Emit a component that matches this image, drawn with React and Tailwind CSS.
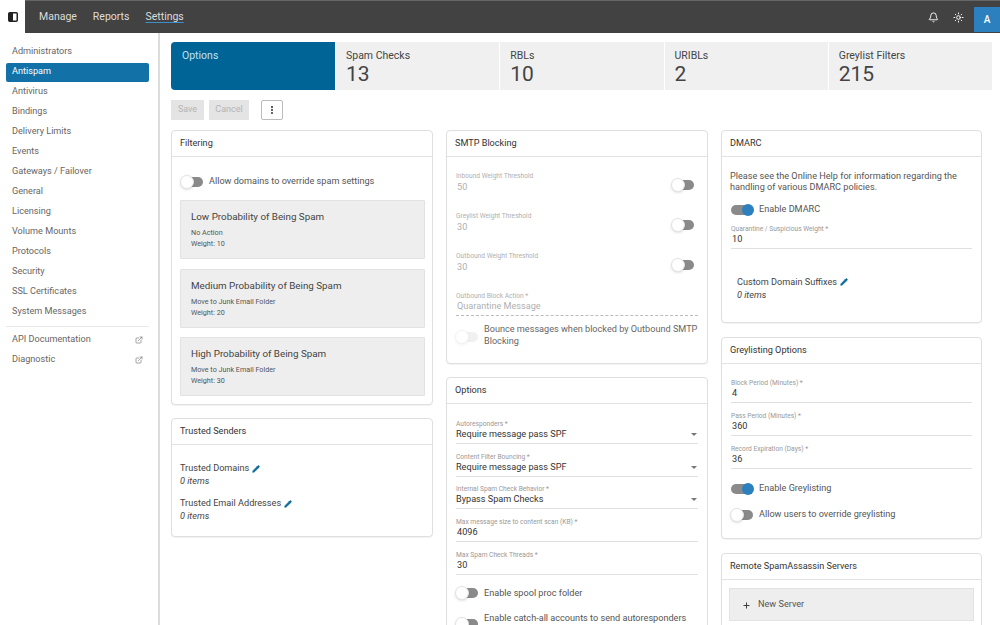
import { Bell, Sun, ExternalLink, Pencil, Plus, EllipsisVertical } from 'lucide-react';

const navItems = ['Administrators', 'Antispam', 'Antivirus', 'Bindings', 'Delivery Limits', 'Events', 'Gateways / Failover', 'General', 'Licensing', 'Volume Mounts', 'Protocols', 'Security', 'SSL Certificates', 'System Messages'];
const tabs = [['Spam Checks', '13'], ['RBLs', '10'], ['URIBLs', '2'], ['Greylist Filters', '215']];

function Toggle({ on, faded }) {
  return (
    <span className={`relative inline-block w-[23px] h-[20px] shrink-0 ${faded ? 'opacity-40' : ''}`}>
      <span className={`absolute top-[5px] left-[1px] w-[22px] h-[10px] rounded-full ${faded ? 'bg-[#ddd]' : 'bg-[#8a8a8a]'}`} />
      {on ? (
        <span className="absolute top-[4px] right-[-1px] w-[12px] h-[12px] rounded-full bg-[#2b80bd]" />
      ) : (
        <span className="absolute top-[3px] left-0 w-[14px] h-[14px] rounded-full bg-white border border-[#e3e3e3] shadow-sm" />
      )}
    </span>
  );
}

function Card({ title, className = '', children }) {
  return (
    <section className={`bg-white border border-[#dfdfdf] rounded-[4px] shadow-[0_1px_1px_rgba(0,0,0,0.05)] ${className}`}>
      <h3 className="h-[26px] px-[8px] flex items-center text-[9.15px] leading-none text-[#333] border-b border-[#e2e2e2]">{title}</h3>
      {children}
    </section>
  );
}

function Field({ label, value, disabled, select, dashed, className = '' }) {
  return (
    <div className={`relative h-[24px] shrink-0 border-b ${dashed ? 'border-dashed border-[#bbb]' : 'border-[#e0e0e0]'} ${className}`}>
      <div className={`text-[6.65px] leading-[9px] ${disabled ? 'text-[#b0b0b0]' : 'text-[#999]'}`}>{label}</div>
      <div className={`text-[9.15px] leading-[11px] ${select ? '' : 'pl-[1px]'} ${disabled ? 'text-[#b0b0b0]' : 'text-[#333]'}`}>{value}</div>
      {select && <span className="absolute right-[1px] top-[13px] border-x-[3px] border-x-transparent border-t-[3px] border-t-[#777]" />}
    </div>
  );
}

function ThresholdRow({ label, value }) {
  return (
    <div className="flex items-start justify-between h-[40px] pr-[4px]">
      <div>
        <div className="text-[6.65px] leading-[9px] text-[#b0b0b0]">{label}</div>
        <div className="text-[9.15px] leading-[13px] pl-[1px] text-[#b0b0b0]">{value}</div>
      </div>
      <span className="mt-[3px]"><Toggle /></span>
    </div>
  );
}

function SwitchRow({ on, label, className = '' }) {
  return (
    <div className={`flex items-center gap-[6px] text-[9.15px] text-[#555] ${className}`}>
      <Toggle on={on} />
      <span>{label}</span>
    </div>
  );
}

function Tile({ title, action, weight }) {
  return (
    <div className="h-[59px] bg-[#eeeeee] border border-[#e2e2e2] rounded-[1px] px-[10px] pt-[10px]">
      <div className="text-[9.8px] leading-[12px] text-[#444]">{title}</div>
      <div className="mt-[4px] text-[7.2px] leading-[11px] text-[#555]">{action}<br />Weight: {weight}</div>
    </div>
  );
}

function ItemList({ label, className = '' }) {
  return (
    <div className={className}>
      <div className="flex items-center gap-[3px] text-[9.15px] leading-[13px] text-[#444]">
        {label}
        <Pencil className="w-[8px] h-[8px] text-[#0b6a99] fill-[#0b6a99]" />
      </div>
      <div className="text-[9.15px] italic leading-[13px] text-[#444]">0 items</div>
    </div>
  );
}

export default function App() {
  return (
    <div className="h-screen w-[1000px] overflow-hidden flex flex-col bg-white font-['Roboto',sans-serif]">
      <header className="h-[33px] shrink-0 flex">
        <div className="w-[25px] flex items-center justify-center">
          <svg viewBox="0 0 10 10" className="w-[10px] h-[10px]">
            <rect x="0.75" y="0.75" width="8.5" height="8.5" rx="1" fill="none" stroke="#222" strokeWidth="1.5" />
            <rect x="1" y="1" width="4" height="8" fill="#222" />
          </svg>
        </div>
        <div className="flex-1 flex items-center bg-[#424242] border-t border-[#666] text-[10.5px] text-[#ddd]">
          <nav className="flex gap-[16px] pl-[14px]">
            <span>Manage</span>
            <span>Reports</span>
            <span className="underline decoration-[#3d8fc9] underline-offset-2">Settings</span>
          </nav>
          <div className="ml-auto flex items-center h-full">
            <Bell className="w-[11px] h-[11px] text-white mr-[14px]" />
            <Sun className="w-[11px] h-[11px] text-white mr-[10px]" />
            <span className="w-[26px] h-[25px] mt-[4px] flex items-center justify-center bg-[#2b80bd] text-white text-[10px] font-medium">A</span>
          </div>
        </div>
      </header>

      <div className="flex-1 flex min-h-0">
        <aside className="w-[160px] shrink-0 border-r-2 border-[#dcdcdc] pt-[9px] pl-[6px] pr-[9px] text-[9.15px] text-[#666]">
          {navItems.map(item => (
            item === 'Antispam'
              ? <div key={item} className="h-[19px] my-[0.5px] flex items-center px-[6px] bg-[#1272a8] text-white rounded-[2px]">{item}</div>
              : <div key={item} className="h-[20px] flex items-center px-[6px]">{item}</div>
          ))}
          <div className="border-t border-[#e8e8e8] mt-[4px] pt-[3px]">
            {['API Documentation', 'Diagnostic'].map(item => (
              <div key={item} className="h-[20px] flex items-center justify-between px-[6px]">
                {item}
                <ExternalLink className="w-[8px] h-[8px] text-[#777]" />
              </div>
            ))}
          </div>
        </aside>

        <main className="flex-1 min-w-0 pl-[11px] pr-[8px] pt-[9px]">
          <div className="flex h-[48px]">
            <div className="w-[164px] bg-[#006596] rounded-l-[4px] text-[#bfe3f5] text-[10.5px] px-[11px] pt-[6px]">Options</div>
            {tabs.map(([name, count]) => (
              <div key={name} className="flex-1 bg-[#f0f0f0] border-l border-white px-[10px] pt-[7px] text-[#444]">
                <div className="text-[10.5px] leading-[13px]">{name}</div>
                <div className="text-[21px] leading-[22px] mt-[1px]">{count}</div>
              </div>
            ))}
          </div>

          <div className="flex items-center h-[20px] mt-[10px]">
            <button className="w-[33px] h-[20px] bg-[#e4e4e4] text-[#b5b5b5] text-[9px]">Save</button>
            <button className="w-[40px] h-[20px] ml-[5px] bg-[#e4e4e4] text-[#b5b5b5] text-[9px]">Cancel</button>
            <button className="w-[22px] h-[20px] ml-[12px] flex items-center justify-center border border-[#bbb] rounded-[2px] text-[#333]">
              <EllipsisVertical className="w-[10px] h-[10px]" strokeWidth={3} />
            </button>
          </div>

          <div className="grid grid-cols-[262px_262px_261px] gap-x-[13px] mt-[10px] items-start">
            <div className="flex flex-col gap-[13px]">
              <Card title="Filtering" className="h-[275px]">
                <div className="pl-[8px] pr-[7px] pt-[15px]">
                  <SwitchRow label="Allow domains to override spam settings" />
                  <div className="flex flex-col gap-[9.5px] mt-[8px]">
                    <Tile title="Low Probability of Being Spam" action="No Action" weight="10" />
                    <Tile title="Medium Probability of Being Spam" action="Move to Junk Email Folder" weight="20" />
                    <Tile title="High Probability of Being Spam" action="Move to Junk Email Folder" weight="30" />
                  </div>
                </div>
              </Card>
              <Card title="Trusted Senders" className="h-[119px]">
                <div className="px-[8px] pt-[17px]">
                  <ItemList label="Trusted Domains" />
                  <ItemList label="Trusted Email Addresses" className="mt-[9px]" />
                </div>
              </Card>
            </div>

            <div className="flex flex-col gap-[13px]">
              <Card title="SMTP Blocking" className="h-[234px]">
                <div className="px-[9px] pt-[15px]">
                  <ThresholdRow label="Inbound Weight Threshold" value="50" />
                  <ThresholdRow label="Greylist Weight Threshold" value="30" />
                  <ThresholdRow label="Outbound Weight Threshold" value="30" />
                  <Field label="Outbound Block Action *" value="Quarantine Message" disabled dashed />
                  <div className="flex gap-[6px] mt-[7px] text-[9.15px] leading-[12px] text-[#666]">
                    <span className="-ml-[1px] mt-[4px]"><Toggle faded /></span>
                    <span>Bounce messages when blocked by Outbound SMTP Blocking</span>
                  </div>
                </div>
              </Card>
              <Card title="Options" className="h-[300px]">
                <div className="px-[9px] pt-[16px] flex flex-col gap-[8.7px]">
                  <Field select label="Autoresponders *" value="Require message pass SPF" />
                  <Field select label="Content Filter Bouncing *" value="Require message pass SPF" />
                  <Field select label="Internal Spam Check Behavior *" value="Bypass Spam Checks" />
                  <Field label="Max message size to content scan (KB) *" value="4096" />
                  <Field label="Max Spam Check Threads *" value="30" />
                  <SwitchRow label="Enable spool proc folder" className="-ml-[1px]" />
                  <div className="flex gap-[6px] text-[9.15px] leading-[12px] text-[#555] -ml-[1px]">
                    <span className="mt-[2px]"><Toggle /></span>
                    <span>Enable catch-all accounts to send autoresponders and bounces</span>
                  </div>
                </div>
              </Card>
            </div>

            <div className="flex flex-col gap-[14px]">
              <Card title="DMARC" className="h-[193px]">
                <div className="px-[8px] pt-[14px]">
                  <p className="text-[9.15px] leading-[11px] text-[#555]">Please see the Online Help for information regarding the handling of various DMARC policies.</p>
                  <SwitchRow on label="Enable DMARC" className="mt-[7px]" />
                  <Field label="Quarantine / Suspicious Weight *" value="10" className="mt-[4.5px] mx-[1px]" />
                  <ItemList label="Custom Domain Suffixes" className="mt-[27px] ml-[7px]" />
                </div>
              </Card>
              <Card title="Greylisting Options" className="h-[202px]">
                <div className="px-[9px] pt-[15px] flex flex-col gap-[9px]">
                  <Field label="Block Period (Minutes) *" value="4" />
                  <Field label="Pass Period (Minutes) *" value="360" />
                  <Field label="Record Expiration (Days) *" value="36" />
                  <SwitchRow on label="Enable Greylisting" className="mt-[1px] -ml-[1px]" />
                  <SwitchRow label="Allow users to override greylisting" className="-mt-[3px] -ml-[1px]" />
                </div>
              </Card>
              <Card title="Remote SpamAssassin Servers" className="h-[120px]">
                <div className="px-[7px] pt-[8px]">
                  <div className="h-[33px] flex items-center gap-[7px] pl-[12px] pt-[1px] bg-[#eeeeee] border border-[#e2e2e2] text-[9.15px] text-[#555]">
                    <Plus className="w-[9px] h-[9px] text-[#333]" strokeWidth={2.5} />
                    New Server
                  </div>
                </div>
              </Card>
            </div>
          </div>
        </main>
      </div>
    </div>
  );
}
